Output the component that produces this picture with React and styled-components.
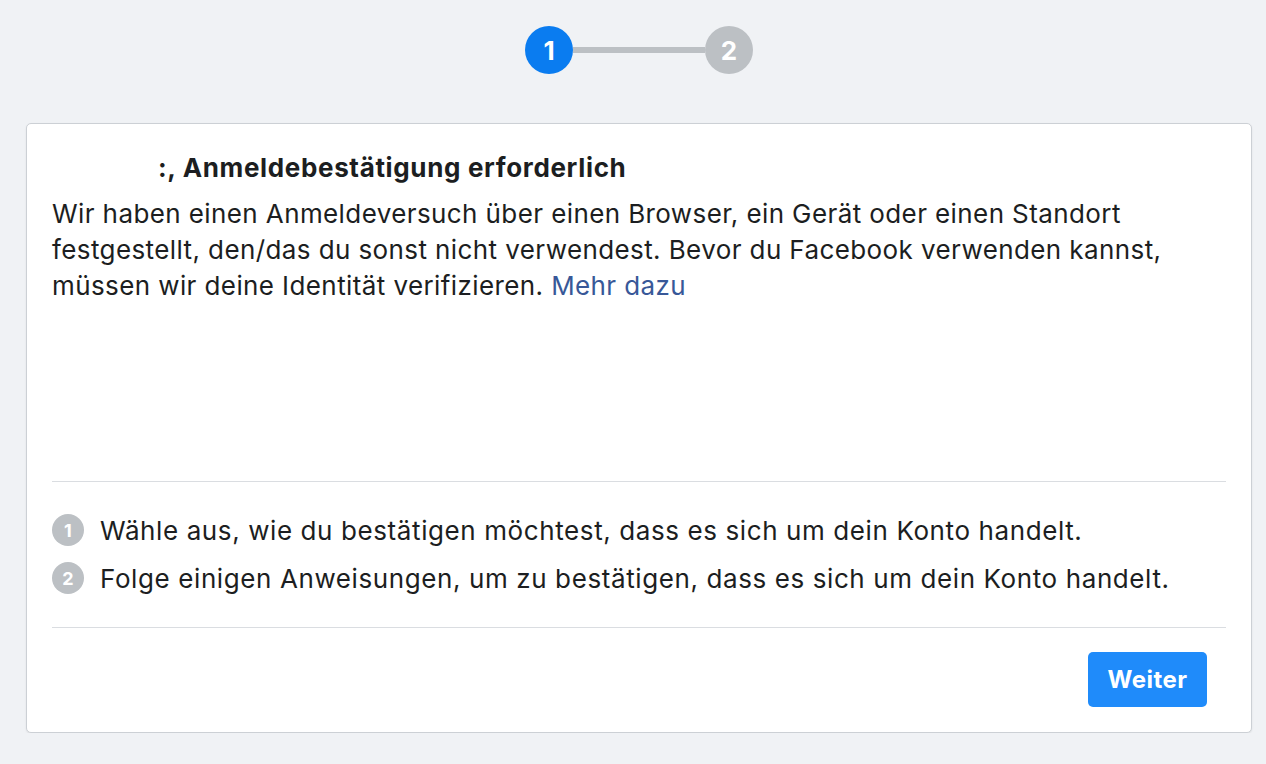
import styled, { createGlobalStyle } from "styled-components";

const GlobalStyles = createGlobalStyle`
  html, body {
    margin: 0;
    padding: 0;
    background: #f0f2f5;
    font-family: Inter, "Noto Sans", "Liberation Sans", sans-serif;
    color: #1c1e21;
  }
`;

const Page = styled.main`
  width: 1226px;
  margin-left: 26px;
  padding-top: 26px;
`;

const Stepper = styled.div`
  display: flex;
  align-items: center;
  justify-content: center;
`;

const StepDot = styled.div`
  width: 48px;
  height: 48px;
  border-radius: 50%;
  background: ${({ $active }) => ($active ? "#0a7cf0" : "#bcc0c4")};
  color: #fff;
  display: flex;
  align-items: center;
  justify-content: center;
  font-size: 26px;
  font-weight: 700;
`;

const StepLine = styled.div`
  width: 132px;
  height: 6px;
  background: #bcc0c4;
`;

const Card = styled.section`
  margin-top: 49px;
  background: #fff;
  border: 1px solid #ccd0d5;
  border-radius: 5px;
  box-shadow: 0 1px 2px rgba(0, 0, 0, 0.08);
  padding: 0 25px;
`;

const Intro = styled.div`
  min-height: 331px;
  padding-top: 26px;
  border-bottom: 1px solid #dadde1;
`;

const Title = styled.h2`
  margin: 0 0 10px;
  font-size: 26px;
  line-height: 36px;
  font-weight: 700;
  letter-spacing: 0.65px;
`;

const Hidden = styled.span`
  display: inline-block;
  width: 106px;
`;

const Body = styled.p`
  margin: 0;
  font-size: 26px;
  line-height: 36px;
  letter-spacing: 0.4px;
`;

const Link = styled.a`
  color: #385898;
  text-decoration: none;
`;

const Steps = styled.ol`
  list-style: none;
  margin: 0;
  padding: 24px 0 25px;
  border-bottom: 1px solid #dadde1;
`;

const StepRow = styled.li`
  display: flex;
  align-items: center;
  gap: 16px;
  height: 48px;
  font-size: 26px;
  letter-spacing: 0.6px;
`;

const SmallDot = styled.span`
  flex: none;
  width: 32px;
  height: 32px;
  border-radius: 50%;
  background: #bcc0c4;
  color: #fff;
  display: flex;
  align-items: center;
  justify-content: center;
  font-size: 18px;
  font-weight: 700;
  letter-spacing: 0;
`;

const Footer = styled.div`
  display: flex;
  justify-content: flex-end;
  padding: 24px 19px 25px 0;
`;

const Button = styled.button`
  width: 119px;
  height: 55px;
  border: none;
  border-radius: 5px;
  background: #1f8bfa;
  color: #fff;
  font-family: inherit;
  font-size: 24px;
  font-weight: 700;
  letter-spacing: 0.5px;
  cursor: pointer;
`;

export default function App() {
  return (
    <>
      <GlobalStyles />
      <Page>
        <Stepper>
          <StepDot $active>1</StepDot>
          <StepLine />
          <StepDot>2</StepDot>
        </Stepper>
        <Card>
          <Intro>
            <Title>
              <Hidden />:, Anmeldebestätigung erforderlich
            </Title>
            <Body>
              Wir haben einen Anmeldeversuch über einen Browser, ein Gerät oder einen Standort
              festgestellt, den/das du sonst nicht verwendest. Bevor du Facebook verwenden kannst,
              müssen wir deine Identität verifizieren. <Link href="#">Mehr dazu</Link>
            </Body>
          </Intro>
          <Steps>
            <StepRow>
              <SmallDot>1</SmallDot>
              Wähle aus, wie du bestätigen möchtest, dass es sich um dein Konto handelt.
            </StepRow>
            <StepRow>
              <SmallDot>2</SmallDot>
              Folge einigen Anweisungen, um zu bestätigen, dass es sich um dein Konto handelt.
            </StepRow>
          </Steps>
          <Footer>
            <Button>Weiter</Button>
          </Footer>
        </Card>
      </Page>
    </>
  );
}
